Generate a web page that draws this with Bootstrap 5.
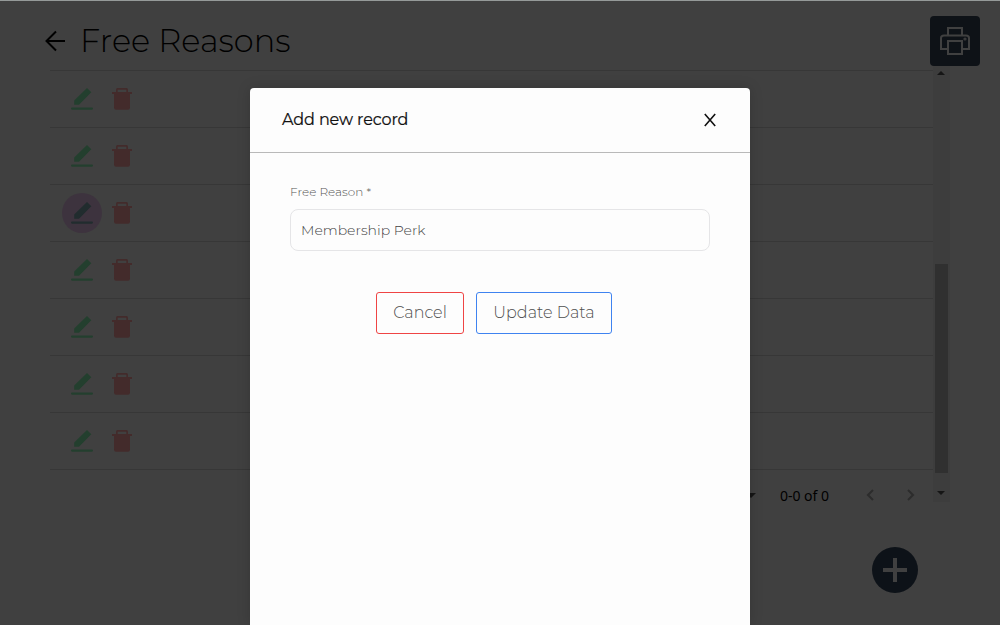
<!DOCTYPE html>
<html lang="en">
<head>
<meta charset="utf-8">
<title>Free Reasons</title>
<link href="https://cdn.jsdelivr.net/npm/bootstrap@5.3.0/dist/css/bootstrap.min.css" rel="stylesheet">
<style>
body{background:#404040;font-family:Montserrat,Inter,"Open Sans",sans-serif;color:#000;height:625px;overflow:hidden;border-top:1px solid #959a99;line-height:1.2}
svg{display:block;flex:none}
.back-icon{margin-top:29px}
.page-head{height:65px;padding:0 20px 0 45px}
.page-title{font-size:32px;font-weight:300;margin:0 0 0 15px;padding-top:20px;line-height:40px;white-space:nowrap;letter-spacing:-.03px}
.print-btn{width:50px;height:50px;margin-top:15px;background:#0e1217;border:0;border-radius:4px;color:#404040}
.grid-wrap{height:436px;margin:0 50px}
.grid-main{padding-top:4px}
.grid-row{height:57px;border-bottom:1px solid #373737;padding-left:12px}
.grid-row:first-child{height:0;border-bottom:0;border-top:1px solid #373737}
.ico-btn{width:40px;height:40px;padding:0;border:0;background:none}
.ico-btn.focused{background:#3d333e}
.pen{color:#233f2e}.focused .pen{color:#212c2e}
.bin{color:#432b2b}
.pager{height:32px;font:14px "Noto Sans",sans-serif;margin-top:9px;padding-right:18px}
.pager-count{margin:0 37px 0 24px}
.pager-next{margin-left:33px}
.bar-track{width:17px;background:#3d3d3d;padding:5px 1px 7px 0}
.thumb{width:13px;height:209px;margin:189px 0 0 1px;background:#303030}
.add-btn{width:46px;height:46px;background:#0d1218;margin:45px 82px 0 auto}
.panel{position:absolute;left:250px;top:88px;width:500px;height:537px;background:#fdfdfd;border-radius:4px 4px 0 0;box-shadow:0 0 14px rgba(0,0,0,.16)}
.panel-head{height:65px;border-bottom:1px solid #b9b9b9;padding:0 34px 0 32px}
.panel-title{font-size:16px;font-weight:400;margin:0;color:#111;letter-spacing:-.1px;-webkit-text-stroke:.2px #111}
.panel-body{padding:31px 40px}
.field-label{font-size:12px;line-height:16px;font-weight:300;color:#555;margin-bottom:9px;display:block}
.panel-body .field{height:42px;border:1px solid #e5e5e7;border-radius:8px;background:#fdfdfd;font-size:14px;font-weight:300;color:#444;padding:0 10px 1px}
.actions{gap:12px;margin:41px 12px 0 0}
.act{height:42px;border-radius:3px;font-size:16px;font-weight:300;color:#4f4f4f;padding:0 0 1px;background:#fdfdfd;white-space:nowrap}
.act-cancel{width:88px;border:1px solid #ef4444}
.act-save{width:136px;border:1px solid #3f83f0}
</style>
</head>
<body>
<header class="page-head d-flex align-items-start">
 <svg class="back-icon" width="20" height="22" viewBox="0 0 20 22" fill="none" stroke="#000" stroke-width="2"><path d="M20 11H1.5M11 1.5L1.5 11L11 20.5"/></svg>
 <h1 class="page-title">Free Reasons</h1>
 <button class="print-btn ms-auto d-flex align-items-center justify-content-center p-0" aria-label="Print"><svg width="30" height="30" viewBox="0 0 30 30" fill="none" stroke="currentColor" stroke-width="2"><path d="M8 9V2H22V9M8 23H1V12Q1 9.5 4 9.5H26Q29 9.5 29 12V23H22M8 15H22V28H8Z"/><circle cx="25" cy="13" r=".6"/></svg></button>
</header>
<main>
 <div class="grid-wrap d-flex">
  <div class="grid-main flex-grow-1"><div id="rows"></div>
   <div class="pager d-flex align-items-center justify-content-end">
    <svg width="10" height="5" viewBox="0 0 10 5"><path d="M0 0H10L5 5Z" fill="#151515"/></svg>
    <span class="pager-count">0-0 of 0</span>
    <svg width="8" height="12" viewBox="0 0 8 12" fill="none" stroke="#2c2c2c" stroke-width="2"><path d="M7 1L2 6L7 11"/></svg>
    <svg class="pager-next" width="8" height="12" viewBox="0 0 8 12" fill="none" stroke="#2c2c2c" stroke-width="2"><path d="M1 1L6 6L1 11"/></svg>
   </div>
  </div>
  <div class="bar-track d-flex flex-column align-items-center">
   <svg width="8" height="4" viewBox="0 0 8 4"><path d="M0 4L4 0L8 4Z" fill="#151515"/></svg>
   <div class="thumb"></div>
   <svg class="mt-auto" width="8" height="4" viewBox="0 0 8 4"><path d="M0 0L4 4L8 0Z" fill="#151515"/></svg>
  </div>
 </div>
 <button class="add-btn rounded-circle border-0 p-0 d-flex align-items-center justify-content-center" aria-label="Add"><svg width="24" height="24" viewBox="0 0 24 24"><path d="M10 0H14V10H24V14H14V24H10V14H0V10H10Z" fill="#404040"/></svg></button>
</main>
<section class="panel" role="dialog" aria-label="Add new record">
 <div class="panel-head d-flex align-items-center justify-content-between">
  <h2 class="panel-title">Add new record</h2>
  <svg width="12" height="14" viewBox="0 0 12 14" fill="none" stroke="#111" stroke-width="1.6"><path d="M.8 1L11.2 13M11.2 1L.8 13"/></svg>
 </div>
 <div class="panel-body">
  <label class="field-label" for="reason">Free Reason *</label>
  <input id="reason" class="form-control field" value="Membership Perk">
  <div class="actions d-flex justify-content-center">
   <button class="act act-cancel">Cancel</button><button class="act act-save">Update Data</button>
  </div>
 </div>
</section>
<script>
const pen='<svg class="pen" width="22" height="22" viewBox="0 0 22 22" fill="currentColor"><path d="M16 0L20.3 4.3L8 16.8H3.2V12.5ZM1 19.5H21Q22 19.5 22 20.6T21 21.7H1Q0 21.7 0 20.6T1 19.5Z"/></svg>';
const bin='<svg class="bin" width="22" height="22" viewBox="0 0 22 22" fill="currentColor"><path fill-rule="evenodd" d="M5 4V1.5Q5 0 6.5 0H15.5Q17 0 17 1.5V4H21V6H19V19.7Q19 21.7 17 21.7H5Q3 21.7 3 19.7V6H1V4ZM6.7 4H15.3V1.7H6.7Z"/></svg>';
let html='<div class="grid-row"></div>';
for(let i=0;i<7;i++)html+=`<div class="grid-row d-flex align-items-center"><button class="ico-btn rounded-circle d-flex align-items-center justify-content-center ${i===2?'focused':''}" aria-label="Edit">${pen}</button><button class="ico-btn d-flex align-items-center justify-content-center" aria-label="Delete">${bin}</button></div>`;
document.getElementById('rows').innerHTML=html;
</script>
<script src="https://cdn.jsdelivr.net/npm/bootstrap@5.3.0/dist/js/bootstrap.bundle.min.js"></script>
</body>
</html>
